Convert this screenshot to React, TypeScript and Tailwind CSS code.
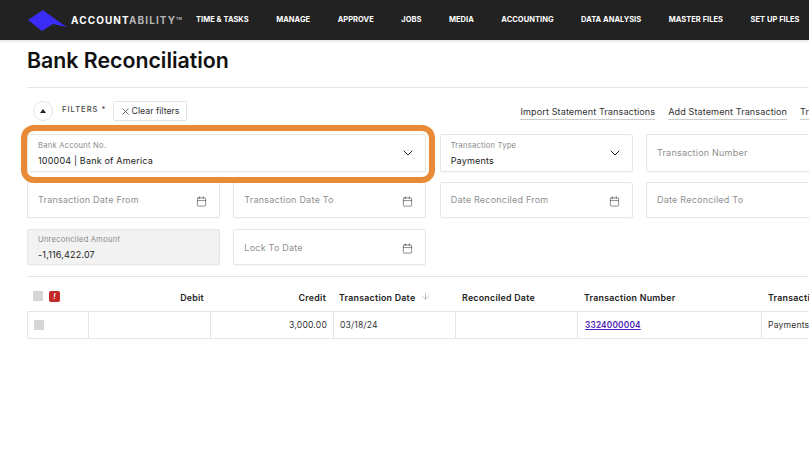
import { Calendar, ChevronDown, X, ArrowDown } from "lucide-react";

const NAV = ["TIME & TASKS", "MANAGE", "APPROVE", "JOBS", "MEDIA", "ACCOUNTING", "DATA ANALYSIS", "MASTER FILES", "SET UP FILES"];

function Logo() {
  return (
    <svg width="39" height="21" viewBox="0 0 39 21" className="shrink-0">
      <path d="M0 10 L15 0 L27 9 L39 17 L25 14 L14 21 Z" fill="#3a2cf5" />
    </svg>
  );
}

function Nav() {
  return (
    <header className="flex h-10 shrink-0 items-center bg-[#222222] pl-[28px] shadow-[0_1px_3px_rgba(0,0,0,0.15)]">
      <Logo />
      <div className="ml-[4px] w-[125px] whitespace-nowrap text-[10px] font-bold tracking-[0.11em] text-white">
        ACCOUNT<span className="text-[#b5b5b5]">ABILITY</span>
        <span className="relative top-[-4px] text-[3.5px] tracking-normal text-[#b5b5b5]">TM</span>
      </div>
      <nav className="flex gap-[27.5px] whitespace-nowrap text-[7.5px] font-bold tracking-[0.005em] text-white">
        {NAV.map((n) => (
          <span key={n}>{n}</span>
        ))}
      </nav>
    </header>
  );
}

function Field({ label, value, icon, filled, className }: { label: string; value?: string; icon?: "calendar" | "chevron"; filled?: boolean; className?: string }) {
  return (
    <div className={`flex items-center rounded-[2px] border border-[#e6e6e6] pl-[10px] pr-[12px] shadow-[0_1px_1px_rgba(0,0,0,0.03)] ${filled ? "bg-[#f2f2f2]" : "bg-white"} ${className ?? ""}`}>
      <div className="min-w-0 flex-1">
        {value ? (
          <>
            <div className="text-[7.6px] leading-[10px] tracking-[0.03em] text-[#8a8a8a]">{label}</div>
            <div className="mt-[4px] text-[9px] leading-[11px] tracking-[0.02em] text-[#222]">{value}</div>
          </>
        ) : (
          <div className="text-[9px] tracking-[0.025em] text-[#8f8f8f]">{label}</div>
        )}
      </div>
      {icon === "chevron" && <ChevronDown size={16} strokeWidth={1.5} className="mr-[-3px] text-[#222]" />}
      {icon === "calendar" && <Calendar size={11} strokeWidth={1.2} className="mt-[2px] text-[#333]" />}
    </div>
  );
}

function Filters() {
  return (
    <div className="relative mt-[13px] grid w-[812px] grid-cols-[193px_193px_193px_193px] gap-x-[13.33px] gap-y-[10px]">
      <Field className="col-span-2 h-[38px]" label="Bank Account No." value="100004 | Bank of America" icon="chevron" />
      <Field className="h-[38px]" label="Transaction Type" value="Payments" icon="chevron" />
      <Field className="h-[38px]" label="Transaction Number" />
      <Field className="h-[36px]" label="Transaction Date From" icon="calendar" />
      <Field className="h-[36px]" label="Transaction Date To" icon="calendar" />
      <Field className="h-[36px]" label="Date Reconciled From" icon="calendar" />
      <Field className="h-[36px]" label="Date Reconciled To" />
      <Field className="mt-[1px] h-[36px] pt-[1px]" label="Unreconciled Amount" value="-1,116,422.07" filled />
      <Field className="mt-[1px] h-[36px] pt-[1px]" label="Lock To Date" icon="calendar" />
      {/* orange callout drawn over the account field */}
      <div className="absolute left-[-6px] top-[-9px] h-[58px] w-[414px] rounded-[13px] border-[6px] border-[#e98b36]" />
    </div>
  );
}

const COLS = "grid grid-cols-[61px_122px_123px_122px_122px_184px_120px]";
const CELL = "flex h-full items-center px-[6px] border-l border-[#e6e6e6] whitespace-nowrap";

function Table() {
  return (
    <div className="mt-[8px] w-[900px] text-[8.6px]">
      <div className={`${COLS} h-[26px] items-center text-[8.8px] font-semibold tracking-[0.03em] text-[#222]`}>
        <div className="flex items-center gap-[6px] pb-[4px] pl-[6px]">
          <span className="h-[10px] w-[10px] bg-[#d6d6d6]" />
          <span className="flex h-[11px] w-[11px] items-center justify-center rounded-[2px] bg-[#c22a2a] text-[7px] font-bold italic leading-none text-white">!</span>
        </div>
        <div className="pr-[6px] text-right">Debit</div>
        <div className="pr-[7px] text-right">Credit</div>
        <div className="flex items-center gap-[6px] pl-[6px]">
          Transaction Date
          <ArrowDown size={9} strokeWidth={1.5} className="mb-[3px] text-[#8a94a6]" />
        </div>
        <div className="pl-[7px]">Reconciled Date</div>
        <div className="pl-[7px]">Transaction Number</div>
        <div className="pl-[7px]">Transaction Type</div>
      </div>
      <div className={`${COLS} h-[28px] items-center border-y border-[#e6e6e6] tracking-[0.02em] text-[#333]`}>
        <div className={CELL}>
          <span className="h-[10px] w-[10px] bg-[#d6d6d6]" />
        </div>
        <div className={CELL} />
        <div className={`${CELL} justify-end`}>3,000.00</div>
        <div className={CELL}>03/18/24</div>
        <div className={CELL} />
        <div className={`${CELL} pl-[7px]`}>
          <span className="text-[8.3px] font-semibold text-[#4b23b5] underline">3324000004</span>
        </div>
        <div className={CELL}>Payments</div>
      </div>
    </div>
  );
}

export default function App() {
  return (
    <div className="flex h-[452px] w-[809px] flex-col overflow-hidden bg-white font-['Inter',sans-serif]">
      <Nav />
      <main className="pl-[27px]">
        <h1 className="mt-[8px] text-[21.3px] font-semibold leading-[24px] text-[#111]">Bank Reconciliation</h1>
        <div className="mt-[15px] h-px w-[800px] bg-[#e6e6e6]" />
        <div className="mt-[13px] flex h-[20px] w-[850px] items-center pl-[6px]">
          <span className="flex h-[20px] w-[20px] items-center justify-center rounded-full border border-[#e3e3e3]">
            <svg width="6" height="4" viewBox="0 0 6 4">
              <path d="M3 0 L6 4 L0 4 Z" fill="#222" />
            </svg>
          </span>
          <span className="mb-[2px] ml-[9px] text-[7.5px] font-medium tracking-[0.14em] text-[#444]">FILTERS *</span>
          <span className="ml-[7px] flex h-[20px] w-[74px] items-center rounded-[2px] border border-[#e3e3e3] pl-[6px] text-[8.8px] text-[#333]">
            <X size={11} strokeWidth={1.6} />
            Clear filters
          </span>
          <div className="ml-[333px] mt-[3px] flex gap-[13px] whitespace-nowrap text-[9.1px] tracking-[0.01em] text-[#333]">
            <span className="border-b border-[#ccc]">Import Statement Transactions</span>
            <span className="border-b border-[#ccc]">Add Statement Transaction</span>
            <span className="border-b border-[#ccc]">Transactions</span>
          </div>
        </div>
        <Filters />
        <div className="mt-[11px] h-px w-[800px] bg-[#e6e6e6]" />
        <Table />
      </main>
    </div>
  );
}
